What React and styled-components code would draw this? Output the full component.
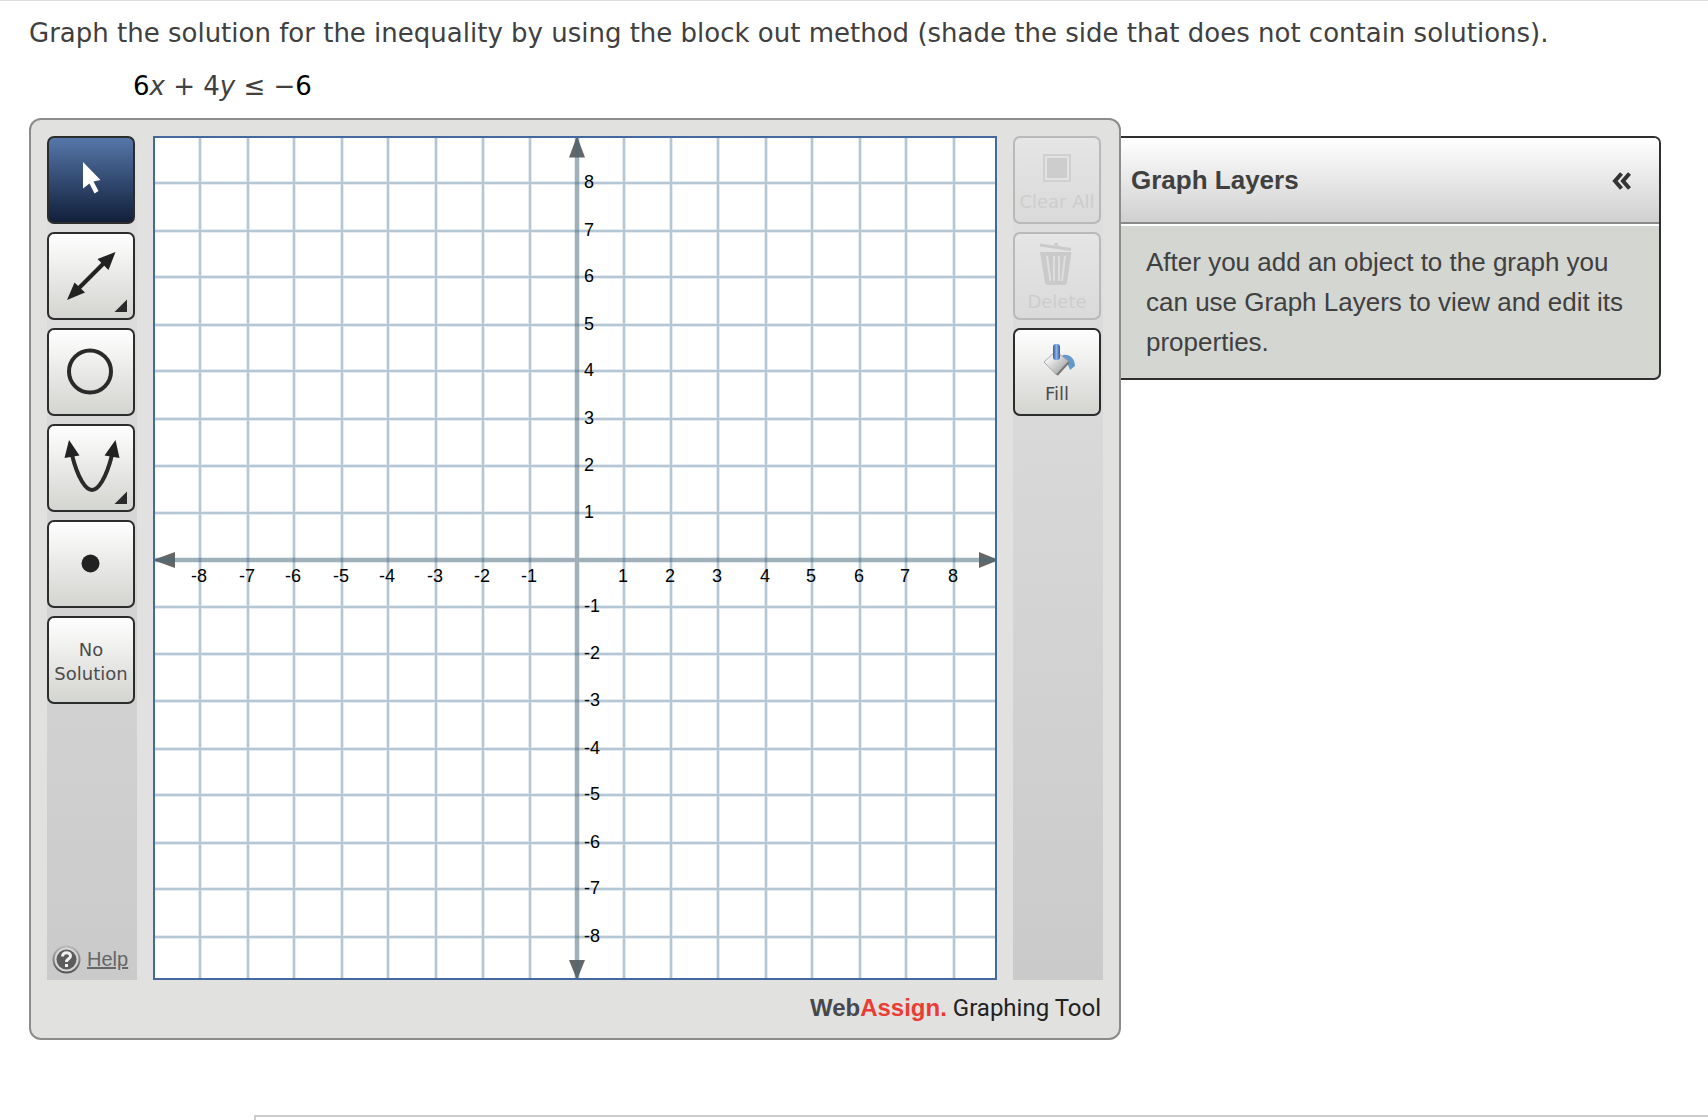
import React, { useState } from 'react';
import styled, { createGlobalStyle, css } from 'styled-components';

const GlobalStyle = createGlobalStyle`
  * {
    box-sizing: border-box;
  }

  body {
    margin: 0;
    background-color: #fff;
    color: #404040;
    font-family: 'Liberation Sans', Arial, sans-serif;
  }

  button {
    font: inherit;
    color: inherit;
  }
`;

const Page = styled.div`
  border-top: 1px solid #ddd;
`;

const Question = styled.main`
  padding: 14px 47px 0 29px;
  font-family: 'DejaVu Sans', Verdana, sans-serif;
  font-size: 26px;
  line-height: 36px;

  p {
    margin: 0;
  }
`;

const Equation = styled.p`
  padding: 17px 0 0 104px;

  b {
    color: #000;
    font-weight: normal;
  }
`;

const Workspace = styled.div`
  display: grid;
  grid-template-columns: 91fr 45fr;
  align-items: start;
  margin-top: 14px;
  font-family: 'Liberation Sans', Arial, sans-serif;
`;

const GraphTool = styled.section`
  padding: 16px 16px 0;
  border: 2px solid #8c8c8c;
  border-radius: 12px;
  background-color: #e1e1df;
`;

const ToolBody = styled.div`
  display: flex;
  gap: 16px;
`;

const Toolbar = styled.div`
  display: flex;
  flex-direction: column;
  flex: none;
  gap: 8px;
  width: 90px;
  background: linear-gradient(#e0e0e0, #cacaca);
`;

const ToolButton = styled.button`
  display: flex;
  flex-direction: column;
  align-items: center;
  justify-content: ${({ $centered }) => ($centered ? 'center' : 'flex-start')};
  width: 88px;
  height: 88px;
  padding: ${({ $centered }) => ($centered ? '3px 0 0' : '0')};
  border: 2px solid #2c2c2c;
  border-radius: 7px;
  background: linear-gradient(#fff, #d3d5d0);
  cursor: pointer;

  svg {
    display: block;
    flex: none;
  }

  &:disabled {
    border-color: #b9b9b9;
    background: linear-gradient(#e5e5e5, #dadada);
    cursor: default;
  }

  ${({ $selected }) =>
    $selected &&
    css`
      background: linear-gradient(#5577a9, #111f3a);
    `}
`;

const ButtonLabel = styled.span`
  color: ${({ $muted }) => ($muted ? '#cdcdcd' : '#4c4c4c')};
  font-family: 'DejaVu Sans', Verdana, sans-serif;
  font-size: 18px;
  line-height: 24px;
  white-space: nowrap;
`;

const HelpLink = styled.a`
  display: flex;
  align-items: center;
  gap: 6px;
  margin-top: auto;
  padding: 0 0 6px 5px;
  color: #666;
  font-size: 20px;
  line-height: 29px;
`;

const GraphCanvas = styled.div`
  flex: 1;
  min-width: 0;
  border: 2px solid #43699f;
  background-color: #fff;

  svg {
    display: block;
    width: 100%;
    height: auto;
  }

  text {
    font-size: 18px;
    fill: #000;
  }
`;

const Brand = styled.footer`
  padding: 13px 2px 15px;
  color: #222;
  font-family: Roboto, 'Liberation Sans', sans-serif;
  font-size: 24px;
  line-height: 30px;
  text-align: right;

  strong {
    color: #46484c;
    font-family: 'Liberation Sans', Arial, sans-serif;
  }

  em {
    color: #ea3c33;
    font-style: normal;
  }
`;

const LayersPanel = styled.aside`
  margin-top: 18px;
  border: 2px solid #2f2f2f;
  border-left: 0;
  border-radius: 0 7px 7px 0;
  background-color: #d4d6d1;
  overflow: hidden;
  font-size: 26px;
`;

const LayersHeader = styled.header`
  display: flex;
  align-items: center;
  justify-content: space-between;
  height: 86px;
  padding: 0 28px 0 10px;
  border-bottom: 2px solid #8a8a8a;
  background: linear-gradient(#fff, #d0d0d0);

  h2 {
    margin: 0;
    font-size: 26px;
  }
`;

const CollapseButton = styled.button`
  display: flex;
  padding: 2px 0 0;
  border: 0;
  background: none;
  cursor: pointer;
`;

const LayersText = styled.p`
  border-top: 2px solid #fff;
  line-height: 40px;

  && {
    padding: 16px 25px;
  }
`;

const NextSection = styled.div`
  height: 5px;
  margin: 75px 0 0 254px;
  border-top: 2px solid #ccc;
  border-left: 2px solid #ccc;
`;

function MoreCorner() {
  return <path d="M78 65.5V78H65.5Z" fill="#2a2a2a" />;
}

function PointerIcon() {
  return (
    <svg width="84" height="84" aria-hidden="true">
      <path d="M34 24 51.5 42 44.5 43.5 49.5 53 45.5 55.5 40.5 45.5 34 50.5Z" fill="#fff" />
    </svg>
  );
}

function LineIcon() {
  return (
    <svg width="84" height="84" aria-hidden="true">
      <path d="M24 60 60 24" stroke="#222" strokeWidth="4" />
      <path d="M66.5 18 48.5 25 59.5 36ZM18 66 25.5 48.5 36 58.5Z" fill="#222" />
      <MoreCorner />
    </svg>
  );
}

function CircleIcon() {
  return (
    <svg width="84" height="84" aria-hidden="true">
      <circle cx="41" cy="41.5" r="21" fill="none" stroke="#2a2a2a" strokeWidth="4" />
    </svg>
  );
}

function ParabolaIcon() {
  return (
    <svg width="84" height="84" aria-hidden="true">
      <path d="M23 29C29 53 37 64 43 64S57 53 63 29" fill="none" stroke="#2a2a2a" strokeWidth="4" />
      <path d="M20 14 15.5 32 30.5 29.5ZM66.5 14 70.5 32 55.5 29.5Z" fill="#222" />
      <MoreCorner />
    </svg>
  );
}

function PointIcon() {
  return (
    <svg width="84" height="84" aria-hidden="true">
      <circle cx="41.5" cy="41.5" r="9" fill="#222" />
    </svg>
  );
}

function ClearIcon() {
  return (
    <svg width="84" height="52" aria-hidden="true">
      <rect x="29" y="17" width="26" height="26" fill="#e2e2e2" stroke="#d0d0d0" strokeWidth="2" />
      <rect x="32" y="20" width="20" height="20" fill="#cdcdcd" />
    </svg>
  );
}

function TrashIcon() {
  return (
    <svg width="84" height="56" aria-hidden="true">
      <path d="M25 11 56 15.5" stroke="#cacaca" strokeWidth="3" />
      <path d="M39 11 40 9H42.5L44 12Z" fill="#cacaca" />
      <path d="M25 18H56.5L52 49Q51.5 51 49 51H33Q30.5 51 30 49Z" fill="#cacaca" />
      <path d="M32 22 35.5 47M39 22V47M44 22V47M50 22 47 47" stroke="#dedede" strokeWidth="2" />
    </svg>
  );
}

function FillIcon() {
  return (
    <svg width="84" height="52" aria-hidden="true">
      <defs>
        <linearGradient id="bucket" x1="0" y1="0" x2="1" y2="1">
          <stop offset="0.2" stopColor="#fafafa" />
          <stop offset="1" stopColor="#8e8e8e" />
        </linearGradient>
        <linearGradient id="handle" x1="0" y1="0" x2="1" y2="0">
          <stop offset="0" stopColor="#2f5cac" />
          <stop offset="0.5" stopColor="#8db2e4" />
          <stop offset="1" stopColor="#2f5cac" />
        </linearGradient>
      </defs>
      <path d="M48 25C55 24 60 29 60 36L55 40L53 35L46 28Z" fill="#6499c9" />
      <path d="M29 32 41 21 54 32 41.5 45Z" fill="url(#bucket)" stroke="#aaa" />
      <path d="M42 45 54 32" stroke="#777" strokeWidth="2" />
      <rect x="38" y="14" width="7" height="16" rx="3" fill="url(#handle)" />
    </svg>
  );
}

function HelpIcon() {
  return (
    <svg width="29" height="29" aria-hidden="true">
      <defs>
        <linearGradient id="helpRing" x1="0" y1="0" x2="0" y2="1">
          <stop offset="0" stopColor="#b8b8b8" />
          <stop offset="1" stopColor="#555" />
        </linearGradient>
      </defs>
      <circle cx="14.5" cy="14.5" r="13" fill="#d6d6d6" stroke="url(#helpRing)" strokeWidth="2" />
      <circle cx="14.5" cy="14.5" r="10" fill="#5c5c5c" />
      <path
        d="M10.5 11.5C10.5 6.5 18.5 6.5 18.5 11C18.5 14 14.5 13.5 14.5 17M14.5 19V22"
        fill="none"
        stroke="#f2f2f2"
        strokeWidth="3"
      />
    </svg>
  );
}

const CENTER = 422;
const SIZE = 840;

const OFFSETS = [47, 94, 141, 189, 235, 283, 329, 377];

const TICKS = [
  ...OFFSETS.map((offset, i) => ({ value: -(i + 1), offset: -offset })),
  ...OFFSETS.map((offset, i) => ({ value: i + 1, offset })),
];

function CoordinatePlane() {
  const grid = TICKS.map(({ offset }) => {
    const at = CENTER + offset;
    return `M${at} 0V${SIZE}M0 ${at}H${SIZE}`;
  }).join('');
  const axes = `M${CENTER} 0V${SIZE}M0 ${CENTER}H${SIZE}`;

  return (
    <svg viewBox={`0 0 ${SIZE} ${SIZE}`} role="img" aria-label="Coordinate plane">
      <path d={grid} stroke="#7c9db4" strokeOpacity="0.2" strokeWidth="4" />
      <path d={grid} stroke="#7c9db4" strokeOpacity="0.46" strokeWidth="2" />
      <path
        d="M422 -2 430 19.500H414ZM422 842 430 822H414ZM-2 422 20 414V430ZM844 422 824 414V430Z"
        fill="#666"
      />
      <path d={axes} stroke="#4a7084" strokeOpacity="0.15" strokeWidth="6" />
      <path d={axes} stroke="#4a6878" strokeOpacity="0.44" strokeWidth="4" />
      {TICKS.map(({ value, offset }) => (
        <React.Fragment key={value}>
          <text x={CENTER + offset - 1} y={CENTER + 22} textAnchor="middle">
            {value}
          </text>
          <text x={CENTER + 7} y={CENTER - offset + 5}>
            {value}
          </text>
        </React.Fragment>
      ))}
    </svg>
  );
}

const TOOLS = [
  { name: 'Pointer', Icon: PointerIcon },
  { name: 'Line', Icon: LineIcon },
  { name: 'Circle', Icon: CircleIcon },
  { name: 'Parabola', Icon: ParabolaIcon },
  { name: 'Point', Icon: PointIcon },
];

function App() {
  const [tool, setTool] = useState('Pointer');
  const [open, setOpen] = useState(true);

  return (
    <Page>
      <GlobalStyle />
      <Question>
        <p>
          Graph the solution for the inequality by using the block out method (shade the side that
          does not contain solutions).
        </p>
        <Equation>
          <b>6</b>
          <i>x</i> + 4<i>y</i> ≤ −<b>6</b>
        </Equation>
        <Workspace>
          <GraphTool>
            <ToolBody>
              <Toolbar>
                {TOOLS.map(({ name, Icon }) => (
                  <ToolButton
                    key={name}
                    type="button"
                    aria-label={name}
                    $selected={tool === name}
                    onClick={() => setTool(name)}
                  >
                    <Icon />
                  </ToolButton>
                ))}
                <ToolButton type="button" $centered>
                  <ButtonLabel>
                    No
                    <br />
                    Solution
                  </ButtonLabel>
                </ToolButton>
                <HelpLink href="#help">
                  <HelpIcon />
                  Help
                </HelpLink>
              </Toolbar>
              <GraphCanvas>
                <CoordinatePlane />
              </GraphCanvas>
              <Toolbar>
                <ToolButton type="button" disabled>
                  <ClearIcon />
                  <ButtonLabel $muted>Clear All</ButtonLabel>
                </ToolButton>
                <ToolButton type="button" disabled>
                  <TrashIcon />
                  <ButtonLabel $muted>Delete</ButtonLabel>
                </ToolButton>
                <ToolButton type="button">
                  <FillIcon />
                  <ButtonLabel>Fill</ButtonLabel>
                </ToolButton>
              </Toolbar>
            </ToolBody>
            <Brand>
              <strong>
                Web<em>Assign.</em>
              </strong>{' '}
              Graphing Tool
            </Brand>
          </GraphTool>
          <LayersPanel>
            <LayersHeader>
              <h2>Graph Layers</h2>
              <CollapseButton
                type="button"
                aria-label="Toggle Graph Layers"
                aria-expanded={open}
                onClick={() => setOpen(!open)}
              >
                <svg width="19" height="18" aria-hidden="true">
                  <path
                    d="M9.5 1.5 3 9 9.5 16.5M17.5 1.5 11 9 17.5 16.5"
                    fill="none"
                    stroke="#333"
                    strokeWidth="4"
                  />
                </svg>
              </CollapseButton>
            </LayersHeader>
            {open && (
              <LayersText>
                After you add an object to the graph you can use Graph Layers to view and edit its
                properties.
              </LayersText>
            )}
          </LayersPanel>
        </Workspace>
      </Question>
      <NextSection />
    </Page>
  );
}

export default App;
